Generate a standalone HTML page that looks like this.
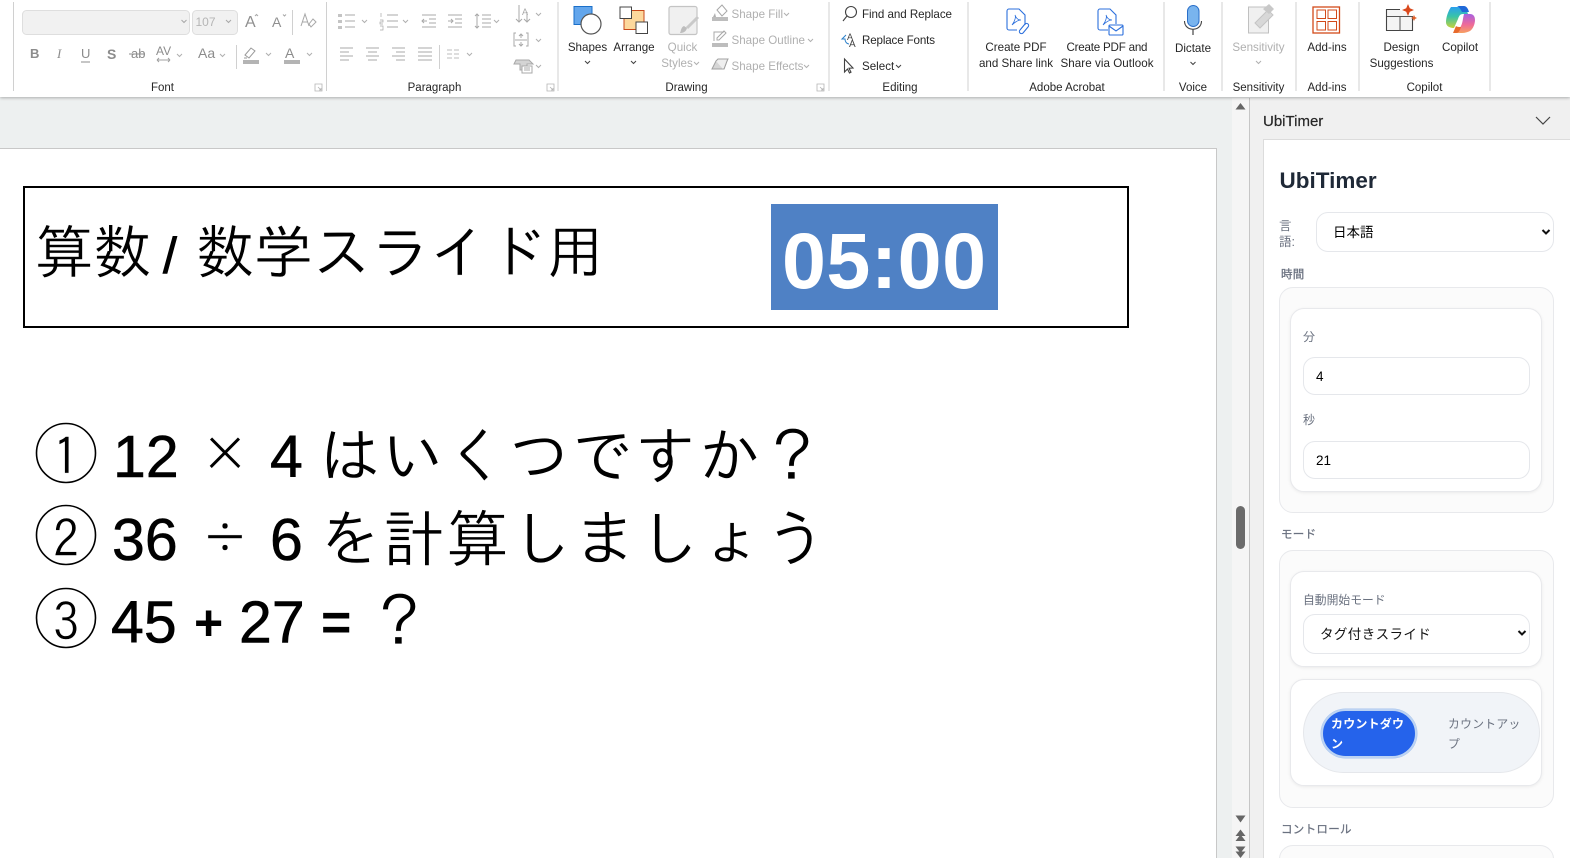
<!DOCTYPE html>
<html lang="ja"><head><meta charset="utf-8"><title>UbiTimer</title>
<style>
html,body{margin:0;padding:0;width:1570px;height:858px;overflow:hidden;background:#edf0f0;font-family:"Liberation Sans","Noto Sans CJK JP",sans-serif}
#root{position:relative;width:1570px;height:858px;overflow:hidden;background:#edf0f0}
.a{position:absolute;box-sizing:border-box}
.l{position:absolute;white-space:nowrap;line-height:1}
svg{position:absolute;left:0;top:0;overflow:visible}
svg text{font-family:"Liberation Sans","Noto Sans CJK JP",sans-serif}
.c1{background:#fbfbfb;border:1px solid #e8e9ec;border-radius:14px}
.c2{background:#fff;border:1px solid #e8e9ec;border-radius:14px;box-shadow:0 1px 3px rgba(0,0,0,.07)}
.f{background:#fff;border:1px solid #e5e7eb;border-radius:12px}
.g{color:#6b7280;font-size:12px}
.gb{color:#6b7280;font-size:11.5px;letter-spacing:.3px;-webkit-text-stroke:.25px #6b7280}
</style></head><body><div id="root">

<!-- slide -->
<div class="a" style="left:0;top:148px;width:1217px;height:710px;background:#fff;border-top:1px solid #c8c8c8;border-right:1px solid #c8c8c8"></div>
<div class="a" style="left:23px;top:186px;width:1106px;height:142px;border:2px solid #000"></div>
<div class="a" style="left:771px;top:204px;width:227px;height:106px;background:#4f81c5"></div>
<svg width="1216" height="858">
<g font-size="58.3" fill="#000" stroke="#fff" stroke-width=".5">
<text x="35" y="273" style="font-family:IPAGothic,'Noto Sans CJK JP',sans-serif">算数</text>
<text x="196" y="273" style="font-family:IPAGothic,'Noto Sans CJK JP',sans-serif">数学スライド用</text>
</g>
<text x="163" y="273" stroke="#000" stroke-width=".9" fill="#000" style="font-family:'Liberation Sans',sans-serif;font-size:50px">/</text>
<text x="782" y="288" font-size="79" font-weight="bold" fill="#fff" textLength="204" style="font-family:'Liberation Sans',sans-serif">05:00</text>
<g fill="none" stroke="#000" stroke-width="1.600">
<circle cx="66" cy="453" r="29.500"/><circle cx="66" cy="535" r="29.500"/><circle cx="66" cy="618" r="29.500"/>
</g>
<g font-size="52" text-anchor="middle" fill="#000" stroke="#fff" stroke-width=".5">
<text x="66" y="476" style="font-family:IPAGothic,sans-serif">1</text>
<text x="66" y="558" style="font-family:IPAGothic,sans-serif">2</text>
<text x="66" y="641" style="font-family:IPAGothic,sans-serif">3</text>
</g>
<g font-size="59" fill="#000" stroke="#000" stroke-width=".6">
<text x="113" y="477">12</text><text x="270" y="477">4</text>
<text x="112" y="560">36</text><text x="270" y="560">6</text>
<text x="111" y="642.500">45</text><text x="194" y="640" font-size="50" font-weight="bold" stroke="none">+</text><text x="239" y="642.500">27</text><text x="321" y="640" font-size="52" font-weight="bold" stroke="none">=</text>
</g>
<g font-size="62" fill="#000" stroke="#fff" stroke-width=".6">
<text x="200" y="472" style="font-family:IPAGothic,sans-serif;font-size:50px">×</text>
<text x="200" y="556" style="font-family:IPAGothic,sans-serif;font-size:50px">÷</text>
<text x="319" y="478" style="font-family:IPAGothic,'Noto Sans CJK JP',sans-serif" textLength="504">はいくつですか？</text>
<text x="319" y="561" style="font-family:IPAGothic,'Noto Sans CJK JP',sans-serif" textLength="508">を計算しましょう</text>
<text x="368" y="643" style="font-family:IPAGothic,'Noto Sans CJK JP',sans-serif">？</text>
</g>
</svg>

<!-- slide scrollbar -->
<div class="a" style="left:1232px;top:98px;width:18px;height:760px;background:#f5f5f5;border-right:1px solid #c6c6c6"></div>
<div class="a" style="left:1236px;top:506px;width:9px;height:43px;background:#6b6b6b;border-radius:5px"></div>
<svg width="1570" height="858"><g fill="#666">
<path d="M1235.500 109.500l5-6.500 5 6.500z"/>
<path d="M1235.500 815.500h10l-5 7z"/>
<path d="M1235.500 836l5-6.500 5 6.500zM1235.500 841l5-6.500 5 6.500z"/>
<path d="M1235.500 846.500h10l-5 6.500zM1235.500 851.500h10l-5 6.500z"/>
</g></svg>

<!-- task pane -->
<div class="a" style="left:1250px;top:98px;width:320px;height:760px;background:#f0f0f0"></div>
<div class="l" style="left:1263px;top:113.500px;font-size:15px;color:#262626;-webkit-text-stroke:.2px #262626">UbiTimer</div>
<svg width="1570" height="858"><path d="M1536 117l7 7 7-7" fill="none" stroke="#444" stroke-width="1.200"/></svg>
<div class="a" style="left:1263px;top:139px;width:307px;height:719px;background:#fff;border:1px solid #dcdcdc;border-right:0;border-bottom:0"></div>

<div class="l" style="left:1279.500px;top:169.500px;font-size:22.500px;font-weight:bold;color:#1f2937">UbiTimer</div>
<div class="l g" style="left:1279px;top:217.500px;line-height:16px;font-size:12.500px;white-space:normal;width:20px">言語:</div>
<div class="a f" style="left:1316px;top:212px;width:238px;height:40px"></div>
<div class="l" style="left:1333px;top:225.500px;font-size:13.500px;color:#000">日本語</div>

<div class="l gb" style="left:1281px;top:270px">時間</div>
<div class="a c1" style="left:1279px;top:287px;width:275px;height:226px"></div>
<div class="a c2" style="left:1290px;top:308px;width:252px;height:184px"></div>
<div class="l g" style="left:1303px;top:331px">分</div>
<div class="a f" style="left:1303px;top:357px;width:227px;height:38px"></div>
<div class="l" style="left:1316px;top:370px;font-size:13.500px;color:#000">4</div>
<div class="l g" style="left:1303px;top:414px">秒</div>
<div class="a f" style="left:1303px;top:441px;width:227px;height:38px"></div>
<div class="l" style="left:1316px;top:454px;font-size:13.500px;color:#000">21</div>

<div class="l gb" style="left:1281px;top:530px">モード</div>
<div class="a c1" style="left:1279px;top:550px;width:275px;height:258px"></div>
<div class="a c2" style="left:1290px;top:571px;width:252px;height:96px"></div>
<div class="l g" style="left:1303px;top:595px;font-size:11.800px">自動開始モード</div>
<div class="a f" style="left:1303px;top:614px;width:227px;height:40px"></div>
<div class="l" style="left:1320px;top:628px;font-size:13.500px;color:#111;letter-spacing:.4px">タグ付きスライド</div>
<div class="a c2" style="left:1290px;top:679px;width:252px;height:107px"></div>
<div class="a" style="left:1303px;top:692px;width:237px;height:81px;background:#f1f4f8;border:1px solid #e5e7eb;border-radius:41px"></div>
<div class="a" style="left:1321px;top:709px;width:96px;height:49px;background:#2563eb;border-radius:25px;box-shadow:0 0 0 .5px #a9c5ee;border:2px solid #bcd3f3"></div>
<div class="l" style="left:1331px;top:714px;width:76px;white-space:normal;word-break:break-all;font-size:12px;line-height:20px;font-weight:bold;color:#fff;letter-spacing:.2px">カウントダウン</div>
<div class="l" style="left:1448px;top:714px;width:74px;white-space:normal;word-break:break-all;font-size:11.800px;line-height:20px;color:#6b7280;letter-spacing:.3px">カウントアップ</div>

<div class="l gb" style="left:1281px;top:825px">コントロール</div>
<div class="a c1" style="left:1279px;top:845px;width:275px;height:40px"></div>
<svg width="1570" height="858"><g fill="none" stroke="#111" stroke-width="2"><path d="M1542.500 230l3.500 3.500 3.500-3.500M1518.500 631l3.500 3.500 3.500-3.500"/></g></svg>

<!-- ribbon -->
<div class="a" style="left:0;top:0;width:1570px;height:97px;background:#fff;box-shadow:0 1px 3px rgba(0,0,0,.28)"></div>
<svg width="1570" height="98" id="rb">
<!-- separators -->
<g stroke="#d0d0d0" stroke-width="1">
<path d="M13.500 2v89M326.500 2v89M558 2v89M829 2v89M968 2v89M1164 2v89M1222 2v89M1296 2v89M1359 2v89M1490 2v89"/>
<path d="M292.500 10v25M236.500 45v24M439.500 45v24"/>
</g>
<!-- group labels -->
<g font-size="11.500" fill="#262626" text-anchor="middle">
<text x="162.500" y="91">Font</text><text x="434.500" y="91">Paragraph</text><text x="686.500" y="91">Drawing</text><text x="900" y="91">Editing</text><text x="1067" y="91">Adobe Acrobat</text><text x="1193" y="91">Voice</text><text x="1258.500" y="91">Sensitivity</text><text x="1327" y="91">Add-ins</text><text x="1424.500" y="91">Copilot</text>
</g>
<!-- dialog launchers -->
<g fill="none" stroke="#b5b5b5" stroke-width=".8">
<path d="M315 84h7v7h-7zM318 87l3 3M321 88v2h-2"/>
<path d="M547 84h7v7h-7zM550 87l3 3M553 88v2h-2"/>
<path d="M817 84h7v7h-7zM820 87l3 3M823 88v2h-2"/>
</g>
<!-- font group -->
<rect x="22.500" y="10.500" width="167" height="24" rx="4" fill="#f1f1f1" stroke="#dedede"/>
<rect x="192.500" y="10.500" width="45" height="24" rx="4" fill="#f1f1f1" stroke="#dedede"/>
<text x="195.500" y="26" font-size="12" fill="#b5b5b5">107</text>
<g fill="none" stroke="#a8a8a8" stroke-width="1">
<path d="M181.500 20l2.500 2.500 2.500-2.500M226 20l2.500 2.500 2.500-2.500"/>
<path d="M255 16l1.500-1.500 1.500 1.500M283 14.500l1.500 1.500 1.500-1.500"/>
<path d="M301 26l4-12 4 12M302.500 22h5M309 24l4-5 3 3-5 5z"/>
</g>
<g fill="#8f8f8f" font-size="16">
<text x="245" y="27">A</text><text x="272" y="27" font-size="14">A</text>
</g>
<g font-size="13" fill="#8c8c8c">
<text x="30" y="58" font-weight="bold">B</text>
<text x="57" y="58" font-style="italic" style="font-family:'Liberation Serif',serif">I</text>
<text x="81" y="58">U</text><path d="M81 62h9" stroke="#8c8c8c"/>
<text x="107" y="59" font-weight="bold" font-size="14">S</text>
<text x="131" y="58">ab</text><path d="M129 54h16" stroke="#8c8c8c"/>
<text x="156" y="55" font-size="12">AV</text>
<path d="M157 60h13M157 60l2-2M157 60l2 2M170 60l-2-2M170 60l-2 2" stroke="#a0a0a0" fill="none"/>
<text x="198" y="58" font-size="14">Aa</text>
</g>
<path d="M245 55l6-7 4 3-6 7z M244 58h3" fill="none" stroke="#9a9a9a"/>
<rect x="243" y="60" width="16" height="4" fill="#b4b4b4"/>
<text x="285" y="58" font-size="14" fill="#8c8c8c">A</text>
<rect x="284" y="60" width="16" height="4" fill="#b4b4b4"/>
<!-- small chevrons disabled -->
<g fill="none" stroke="#b0b0b0" stroke-width="1">
<path d="M177 54l2.500 2.500 2.500-2.500M220 54l2.500 2.500 2.500-2.500M266 53l2.500 2.500 2.500-2.500M307 53l2.500 2.500 2.500-2.500"/>
<path d="M362 20l2.500 2.500 2.500-2.500M403 20l2.500 2.500 2.500-2.500M494 20l2.500 2.500 2.500-2.500M536 13l2.500 2.500 2.500-2.500M536 39l2.500 2.500 2.500-2.500M536 65l2.500 2.500 2.500-2.500M467 53l2.500 2.500 2.500-2.500"/>
</g>
<!-- paragraph group -->
<g stroke="#a8a8a8" stroke-width="1" fill="none">
<path d="M345 15h10M345 21h10M345 27h10M387 15h11M387 21h11M387 27h11"/>
<path d="M338 14h4v3h-4zM338 20h4v3h-4zM338 26h4v3h-4z" fill="#c4c4c4" stroke="none"/>
<path d="M381 13v4M380 20h3v2h-3v2h3M380 26h3v4h-3" stroke-width=".7"/>
<path d="M422 15h14M429 19h7M429 23h7M422 27h14M427 21h-5M424 19l-2 2 2 2" />
<path d="M448 15h14M455 19h7M455 23h7M448 27h14M448 21h5M451 19l2 2-2 2"/>
<path d="M482 15h9M482 19h9M482 23h9M482 27h9M477 14v14M475 16l2-2 2 2M475 26l2 2 2-2"/>
<path d="M340 48h13M340 52h9M340 56h13M340 60h9M366 48h13M368 52h9M366 56h13M368 60h9M392 48h13M396 52h9M392 56h13M396 60h9M418 48h14M418 52h14M418 56h14M418 60h14"/>
<path d="M447 50h5M447 54h5M447 58h5M454 50h5M454 54h5M454 58h5" stroke-width=".8"/>
<path d="M519 5v17M516 19l3 3 3-3M527 12v10M524 19l3 3 3-3"/>
<path d="M516 33h-2v13h2M526 33h2v13h-2M521 34v4M521 42v4M519 36l2-2 2 2M519 44l2 2 2-2M515 40h12"/>
<path d="M516 60h13l4 4h-6v6h-7v-6h-6z" fill="#d4d4d4"/><path d="M522 66h10v7h-10z" fill="#fff"/><path d="M524 68h6M524 70h6"/>
</g>
<text x="522" y="15" font-size="9" fill="#a8a8a8">A</text>
<!-- Drawing -->
<rect x="574" y="6.500" width="18" height="18" fill="#63a6ec" stroke="#1a6fc9"/>
<circle cx="591" cy="24" r="10" fill="#fff" stroke="#555" stroke-width="1.200"/>
<rect x="624" y="10.500" width="20" height="19" fill="#fdd89c" stroke="#c8481a"/>
<rect x="620" y="7" width="11.500" height="11.500" fill="#fff" stroke="#444"/>
<rect x="636" y="22" width="11.500" height="11.500" fill="#fff" stroke="#444"/>
<g font-size="11.600" fill="#262626" text-anchor="middle">
<text x="587.500" y="51">Shapes</text><text x="634" y="51">Arrange</text>
<text x="1016" y="51">Create PDF</text><text x="1016" y="67">and Share link</text>
<text x="1107" y="51" textLength="81">Create PDF and</text><text x="1107" y="67" textLength="93">Share via Outlook</text>
<text x="1193" y="52">Dictate</text>
<text x="1327" y="51">Add-ins</text>
<text x="1401.500" y="51">Design</text><text x="1401.500" y="67">Suggestions</text>
<text x="1460" y="51">Copilot</text>
</g>
<g font-size="11.600" fill="#b0b0b0" text-anchor="middle">
<text x="682.500" y="51">Quick</text><text x="677" y="67">Styles</text>
<text x="1258.500" y="51">Sensitivity</text>
</g>
<g font-size="11.600" fill="#b0b0b0">
<text x="731.500" y="18">Shape Fill</text><text x="731.500" y="44">Shape Outline</text><text x="731.500" y="70">Shape Effects</text>
</g>
<g font-size="11.600" fill="#262626">
<text x="862" y="18" textLength="90">Find and Replace</text><text x="862" y="44" textLength="73">Replace Fonts</text><text x="862" y="70">Select</text>
</g>
<g fill="none" stroke="#444" stroke-width="1">
<path d="M585 61l2.500 2.500 2.500-2.500M631 61l2.500 2.500 2.500-2.500M896 65l2.500 2.500 2.500-2.500M1190.500 62l2.500 2.500 2.500-2.500"/>
</g>
<g fill="none" stroke="#b0b0b0" stroke-width="1">
<path d="M694 62l2.500 2.500 2.500-2.500M784 13l2.500 2.500 2.500-2.500M808 39l2.500 2.500 2.500-2.500M804 65l2.500 2.500 2.500-2.500M1256 61l2.500 2.500 2.500-2.500"/>
</g>
<!-- quick styles -->
<rect x="669" y="6.500" width="28" height="28" rx="2" fill="#f0f0f0" stroke="#c4c4c4" stroke-width="1.200"/>
<path d="M698 17l-11 11" stroke="#c9c9c9" stroke-width="3"/>
<path d="M680 33c3 0 6-1 7-5l-3-2c-3 1-3 5-4 7z" fill="#bdbdbd"/>
<!-- shape fill etc -->
<path d="M717 10l5-5 5 6-5 5z" fill="#fff" stroke="#a8a8a8"/>
<path d="M715 13l-2 4 3 0z" fill="#b0b0b0"/>
<rect x="712" y="17" width="16" height="4" fill="#bdbdbd"/>
<path d="M714 41v-9h10M726 33l-7 7-2 0 0-2 7-7z" fill="none" stroke="#a8a8a8"/>
<rect x="712" y="43" width="16" height="4" fill="#bdbdbd"/>
<path d="M712 69l4-8h11l-3 8z" fill="#d6d6d6" stroke="#a0a0a0"/>
<path d="M716 61l2-2h10l-1 2-3 8-1 0" fill="#efefef" stroke="#a0a0a0"/>
<!-- editing icons -->
<g fill="none" stroke="#404040" stroke-width="1.100">
<circle cx="851" cy="12" r="5.500"/><path d="M847 16l-4 5"/>
<path d="M844.500 59v13l3-3 2 4 1.500-.8-2-4 4-.2z"/>
</g>
<text x="847" y="40" font-size="9" fill="#444">A</text><text x="849" y="47" font-size="10" fill="#444">A</text>
<path d="M846 35l-4 4h3c0 3 2 5 4 5" fill="none" stroke="#2a7fc9" stroke-width="1"/>
<!-- pdf icons -->
<g fill="none" stroke="#2b6fdc" stroke-width="1.100">
<path d="M1007 11a2 2 0 0 1 2-2h10l6 6v10M1007 11v17a2 2 0 0 0 2 2h8"/>
<path d="M1012 25c3-4 4-8 3-10 1 3 3 5 6 5-3 0-6 2-9 5z" stroke-width=".8"/>
<path d="M1020 30l5-6a2 2 0 0 1 3 3l-5 6a2 2 0 0 1-3-3z"/>
<path d="M1098 11a2 2 0 0 1 2-2h10l6 6v9M1098 11v17a2 2 0 0 0 2 2h8"/>
<path d="M1103 25c3-4 4-8 3-10 1 3 3 5 6 5-3 0-6 2-9 5z" stroke-width=".8"/>
<rect x="1109" y="25" width="14" height="10" rx="1" fill="#fff"/><path d="M1109 26l7 5 7-5"/>
</g>
<!-- mic -->
<rect x="1187.500" y="5.500" width="11.500" height="21" rx="5.700" fill="#79b4ee" stroke="#2a6fc9"/>
<path d="M1184.500 21c0 11 17 11 17 0" fill="none" stroke="#444" stroke-width="1.100"/>
<path d="M1193 29v6" stroke="#444" stroke-width="1.200"/>
<!-- sensitivity -->
<rect x="1248.500" y="7" width="20" height="26" fill="#f0f0f0" stroke="#c0c0c0"/>
<path d="M1255 23l13-13 5 5-13 13z" fill="#d8d8d8" stroke="#c4c4c4"/>
<path d="M1263 9l6-5 5 5-5 5z" fill="#c8c8c8"/>
<!-- add-ins -->
<rect x="1313" y="7" width="26.500" height="26" fill="#fff" stroke="#d24a1a" stroke-width="1.300"/>
<g fill="none" stroke="#d24a1a" stroke-width="1">
<rect x="1317" y="10" width="8.500" height="8.500"/><rect x="1328" y="10" width="8.500" height="8.500"/>
<rect x="1317" y="21.500" width="8.500" height="8.500"/><rect x="1328" y="21.500" width="8.500" height="8.500"/>
</g>
<!-- design -->
<path d="M1400 9.500h-13.500v21h26v-14" fill="#f4f4f4" stroke="#444" stroke-width="1.100"/>
<path d="M1387 16.500h26M1400 16.500v14" stroke="#555" fill="none"/>
<path d="M1408 4l1.800 4.200 4.200 1.800-4.200 1.800-1.800 4.200-1.800-4.200-4.200-1.800 4.200-1.800z" fill="#d9481c"/>
<path d="M1414 15l1 2 2 1-2 1-1 2-1-2-2-1 2-1z" fill="#e0622c"/>
<!-- copilot -->
<defs>
<linearGradient id="cg1" x1="0" y1="0" x2="0" y2="1"><stop offset="0" stop-color="#2aa0ee"/><stop offset=".45" stop-color="#38c3a8"/><stop offset="1" stop-color="#c7d23a"/></linearGradient>
<linearGradient id="cg2" x1="0" y1="0" x2="0" y2="1"><stop offset="0" stop-color="#a860e0"/><stop offset=".55" stop-color="#ee6a9a"/><stop offset="1" stop-color="#f7a060"/></linearGradient>
</defs>
<path d="M1451 7h11c3 0 4 2 5 4l1 3h-5c-3 0-4 2-5 5l-4 9c-3 0-8-1-8-6 0-4 2-11 5-15z" fill="url(#cg1)"/>
<path d="M1457 6h7c2 0 4 2 5 6h-7c-2-4-3-5-5-6z" fill="#1f68d8"/>
<path d="M1464 14h6c3 0 5 2 5 6 0 4-2 9-5 11-2 1-5 2-8 2h-8c3-1 6-5 7-7 2-4 2-9 3-12z" fill="url(#cg2)"/>
<path d="M1453 33l3-7c1 1 3 1 5 1-1 3-2 6-5 6z" fill="#e76a2c"/>
</svg>
</div></body></html>
